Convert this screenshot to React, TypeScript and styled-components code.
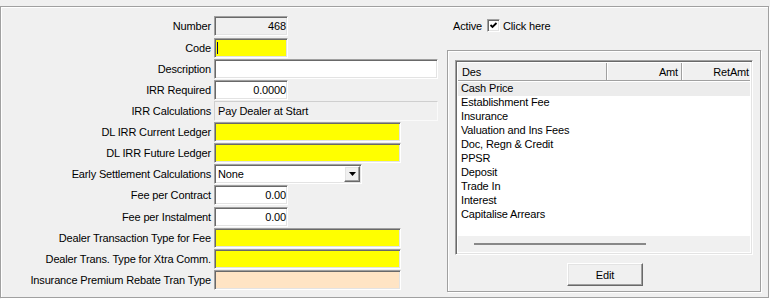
import React from 'react';
import styled, { createGlobalStyle, css } from 'styled-components';

const Global = createGlobalStyle`
  html, body { margin: 0; padding: 0; background: #f0f0f0; }
  body { font-family: "Liberation Sans", Arial, sans-serif; font-size: 11px; letter-spacing: -0.15px; color: #000; }
  * { box-sizing: border-box; }
`;

const sunken = css`
  border-style: solid;
  border-width: 1px;
  border-color: #a0a0a0 #fff #fff #a0a0a0;
  box-shadow: inset 1px 1px 0 #696969, inset -1px -1px 0 #e3e3e3;
`;

const Page = styled.div`
  width: 770px;
  height: 299px;
  padding-top: 6px;
  overflow: hidden;
`;

const Frame = styled.div`
  width: 769px;
  height: 292px;
  border: 1px solid #a0a0a0;
  box-shadow: inset 1px 1px 0 #fff, 1px 1px 0 #fff;
  display: flex;
`;

const Form = styled.div`
  width: 446px;
  padding-top: 8px;
  display: flex;
  flex-direction: column;
`;

const Row = styled.div<{ $extra?: boolean }>`
  display: flex;
  align-items: center;
  height: 20px;
  margin-top: ${p => (p.$extra ? 2 : 1)}px;
`;

const Label = styled.div`
  width: 210px;
  margin-right: 3px;
  text-align: right;
  white-space: nowrap;
  flex-shrink: 0;
`;

type FieldProps = { $w: number; $bg?: string; $right?: boolean; $flat?: boolean };

const Field = styled.div<FieldProps>`
  position: relative;
  width: ${p => p.$w}px;
  height: 20px;
  background: ${p => p.$bg || '#fff'};
  ${p =>
    p.$flat
      ? css`
          border: 1px solid;
          border-color: #cfcfcf #fafafa #fafafa #cfcfcf;
        `
      : sunken}
  display: flex;
  align-items: center;
  justify-content: ${p => (p.$right ? 'flex-end' : 'flex-start')};
  padding: ${p => (p.$right ? '0 1px 0 0' : '0 0 0 3px')};
  white-space: nowrap;
`;

const Caret = styled.span`
  position: absolute;
  left: 2px;
  top: 3px;
  width: 1px;
  height: 12px;
  background: #000060;
`;

const Combo = styled.div`
  width: 148px;
  height: 20px;
  background: #fff;
  ${sunken}
  display: flex;
  align-items: center;
  padding-left: 3px;
`;

const ComboText = styled.span`
  flex: 1;
`;

const DropButton = styled.div`
  width: 16px;
  height: 16px;
  margin-right: 1px;
  background: #f0f0f0;
  border: 1px solid;
  border-color: #fff #696969 #696969 #fff;
  box-shadow: inset -1px -1px 0 #a0a0a0, inset 1px 1px 0 #e3e3e3;
  display: flex;
  align-items: center;
  justify-content: center;
`;

const Side = styled.div`
  display: flex;
  flex-direction: column;
`;

const ActiveRow = styled.div`
  display: flex;
  align-items: center;
  height: 13px;
  margin-top: 12px;
  padding-left: 6px;
`;

const ActiveLabel = styled.span`
  width: 34px;
`;

const CheckBox = styled.div`
  width: 13px;
  height: 13px;
  background: #fff;
  ${sunken}
  display: flex;
  align-items: center;
  justify-content: center;
  margin-right: 3px;
`;

const GroupBox = styled.div`
  margin-top: 18px;
  width: 314px;
  height: 242px;
  border: 1px solid #a0a0a0;
  box-shadow: inset 1px 1px 0 #fff, 1px 1px 0 #fff;
  padding: 9px 0 0 7px;
  display: flex;
  flex-direction: column;
`;

const ListView = styled.div`
  width: 298px;
  height: 195px;
  background: #fff;
  ${sunken}
  padding: 2px;
  display: flex;
  flex-direction: column;
`;

const Header = styled.div`
  display: flex;
  height: 18px;
  background: #f0f0f0;
  border-bottom: 1px solid #a0a0a0;
  flex-shrink: 0;
`;

const HeaderCell = styled.div<{ $w: number; $right?: boolean }>`
  width: ${p => p.$w}px;
  flex-shrink: 0;
  display: flex;
  align-items: center;
  justify-content: ${p => (p.$right ? 'flex-end' : 'flex-start')};
  padding: ${p => (p.$right ? '0 3px 0 0' : '0 0 0 4px')};
  border-right: 1px solid #a0a0a0;
  box-shadow: 1px 0 0 #fff;
  &:last-child {
    border-right: none;
    box-shadow: none;
  }
`;

const Rows = styled.div`
  flex: 1;
  padding-top: 1px;
`;

const ItemRow = styled.div<{ $selected?: boolean }>`
  height: 14px;
  line-height: 13px;
  padding-left: 3px;
  background: ${p => (p.$selected ? '#ececec' : 'transparent')};
`;

const ScrollBand = styled.div`
  height: 16px;
  background: #f0f0f0;
  display: flex;
  align-items: center;
  padding-left: 16px;
  flex-shrink: 0;
`;

const ScrollThumb = styled.div`
  width: 172px;
  height: 2px;
  background: #888;
`;

const EditButton = styled.div`
  margin: 8px 0 0 112px;
  width: 76px;
  height: 23px;
  background: #f0f0f0;
  border: 1px solid;
  border-color: #fff #696969 #696969 #fff;
  box-shadow: inset -1px -1px 0 #a0a0a0, inset 1px 1px 0 #e3e3e3;
  display: flex;
  align-items: center;
  justify-content: center;
`;

const items = [
  'Cash Price',
  'Establishment Fee',
  'Insurance',
  'Valuation and Ins Fees',
  'Doc, Regn & Credit',
  'PPSR',
  'Deposit',
  'Trade In',
  'Interest',
  'Capitalise Arrears',
];

export default function App() {
  return (
    <>
      <Global />
      <Page>
        <Frame>
          <Form>
            <Row>
              <Label>Number</Label>
              <Field $w={74} $bg="#f0f0f0" $right>468</Field>
            </Row>
            <Row $extra>
              <Label>Code</Label>
              <Field $w={74} $bg="#ffff00"><Caret /></Field>
            </Row>
            <Row>
              <Label>Description</Label>
              <Field $w={224} />
            </Row>
            <Row>
              <Label>IRR Required</Label>
              <Field $w={74} $right>0.0000</Field>
            </Row>
            <Row>
              <Label>IRR Calculations</Label>
              <Field $w={224} $bg="#f0f0f0" $flat>Pay Dealer at Start</Field>
            </Row>
            <Row>
              <Label>DL IRR Current Ledger</Label>
              <Field $w={187} $bg="#ffff00" />
            </Row>
            <Row>
              <Label>DL IRR Future Ledger</Label>
              <Field $w={187} $bg="#ffff00" />
            </Row>
            <Row>
              <Label>Early Settlement Calculations</Label>
              <Combo>
                <ComboText>None</ComboText>
                <DropButton>
                  <svg width="7" height="4" viewBox="0 0 7 4">
                    <polygon points="0,0 7,0 3.5,4" fill="#000" />
                  </svg>
                </DropButton>
              </Combo>
            </Row>
            <Row>
              <Label>Fee per Contract</Label>
              <Field $w={74} $right>0.00</Field>
            </Row>
            <Row $extra>
              <Label>Fee per Instalment</Label>
              <Field $w={74} $right>0.00</Field>
            </Row>
            <Row>
              <Label>Dealer Transaction Type for Fee</Label>
              <Field $w={187} $bg="#ffff00" />
            </Row>
            <Row>
              <Label>Dealer Trans. Type for Xtra Comm.</Label>
              <Field $w={187} $bg="#ffff00" />
            </Row>
            <Row>
              <Label>Insurance Premium Rebate Tran Type</Label>
              <Field $w={187} $bg="#ffe4c4" />
            </Row>
          </Form>
          <Side>
            <ActiveRow>
              <ActiveLabel>Active</ActiveLabel>
              <CheckBox>
                <svg width="9" height="9" viewBox="0 0 9 9">
                  <polyline points="1.5,4 3.5,6 7.5,2" fill="none" stroke="#000" strokeWidth="1.8" />
                </svg>
              </CheckBox>
              <span>Click here</span>
            </ActiveRow>
            <GroupBox>
              <ListView>
                <Header>
                  <HeaderCell $w={149}>Des</HeaderCell>
                  <HeaderCell $w={75} $right>Amt</HeaderCell>
                  <HeaderCell $w={70} $right>RetAmt</HeaderCell>
                </Header>
                <Rows>
                  {items.map((t, i) => (
                    <ItemRow key={t} $selected={i === 0}>{t}</ItemRow>
                  ))}
                </Rows>
                <ScrollBand>
                  <ScrollThumb />
                </ScrollBand>
              </ListView>
              <EditButton>Edit</EditButton>
            </GroupBox>
          </Side>
        </Frame>
      </Page>
    </>
  );
}
